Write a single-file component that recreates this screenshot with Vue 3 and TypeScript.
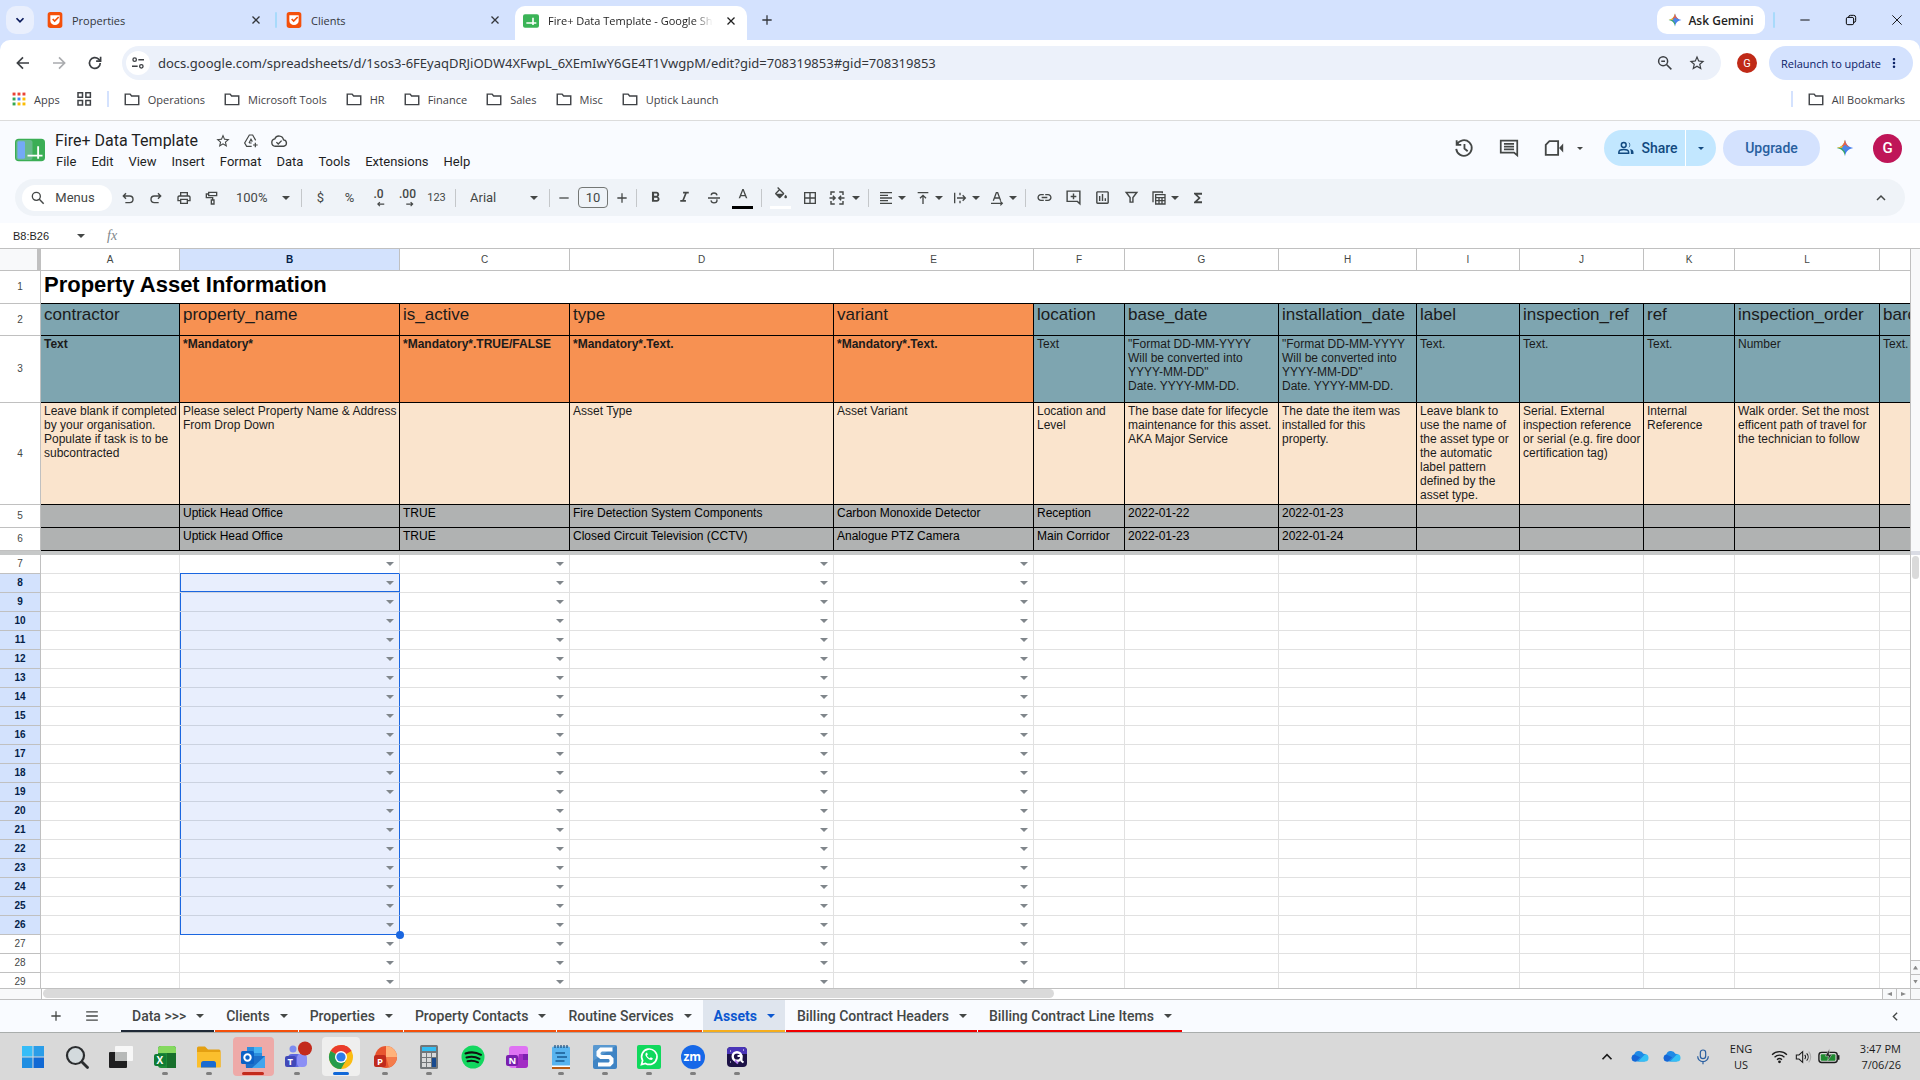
<script setup lang="ts">
import { h, ref } from 'vue'
import type { FunctionalComponent } from 'vue'

const f = (d: string) => `<path d="${d}" fill="currentColor" stroke="none"/>`
const s = (d: string, w = 2) => `<path d="${d}" stroke-width="${w}"/>`

const star = f('M22 9.24l-7.19-.62L12 2 9.19 8.63 2 9.24l5.46 4.73L5.82 21 12 17.27 18.18 21l-1.63-7.03L22 9.24zM12 15.4l-3.76 2.27 1-4.28-3.32-2.88 4.38-.38L12 6.1l1.71 4.04 4.38.38-3.32 2.88 1 4.28L12 15.4z')

const icons: Record<string, string> = {
  chevDown: s('M6 9l6 6 6-6', 3),
  chevUp: s('M6 15l6-6 6 6', 2.2),
  chevLeft: s('M15 5l-7 7 7 7', 2.5),
  close: s('M5 5l14 14M19 5L5 19', 2.6),
  thinClose: s('M4 4l16 16M20 4L4 20', 1.5),
  minimize: s('M4 12h16', 1.6),
  restore: '<rect x="4" y="7.500" width="12.500" height="12.500" rx="2.500" stroke-width="1.700"/>' + s('M8 7.500V7a3 3 0 0 1 3-3h5.500A3.500 3.500 0 0 1 20 7.500V13a3 3 0 0 1-3 3h-.5', 1.7),
  plus: s('M12 4v16M4 12h16', 2.2),
  minus: s('M4 12h16', 2.2),
  back: s('M20 12H5M12 4.500L4.500 12l7.500 7.500', 2.2),
  forward: s('M4 12h15M12 4.500l7.500 7.500-7.500 7.500', 2.2),
  reload: s('M19 12a7.200 7.200 0 1 1-2.200-5.200L19 9', 2.2) + s('M19.500 3.500V9.500H13.500', 2.2),
  tune: '<circle cx="7" cy="7" r="2.600" stroke-width="2"/><circle cx="17" cy="17" r="2.600" stroke-width="2"/>' + s('M12.500 7H21M3 17h8.500', 2.2),
  zoomOut: '<circle cx="9.500" cy="9.500" r="6" stroke-width="2"/>' + s('M14 14l6.500 6.500M7 9.500h5', 2),
  search: '<circle cx="9.500" cy="9.500" r="6" stroke-width="2"/>' + s('M14 14l6.500 6.500', 2.2),
  star,
  folder: s('M3 5.500h6.500l2 2.500H21v11.500H3z', 1.9),
  grid4: s('M4 3.500h6v6H4zM14.500 3.500h6v6h-6zM4 14h6v6H4zM14.500 14h6v6h-6z', 2),
  dots: f('M12 3.500a2.200 2.200 0 1 0 0 4.400 2.200 2.200 0 0 0 0-4.400zM12 9.800a2.200 2.200 0 1 0 0 4.400 2.200 2.200 0 0 0 0-4.400zM12 16.100a2.200 2.200 0 1 0 0 4.400 2.200 2.200 0 0 0 0-4.400z'),
  drive: s('M13 20H5.500L2.500 15 9.500 3h5l4.500 8M9 15l3-5.500 2 3.500M9 15h4', 1.8) + s('M18.500 14.500v7M15 18h7', 1.8),
  cloudDone: s('M7 19a5 5 0 0 1-.5-9.900A6 6 0 0 1 18 10.500 4.300 4.300 0 0 1 18.500 19zM8.500 13.500l2.500 2.500 4.500-4.500', 1.8),
  history: s('M4 3.500v5h5M4.200 8.500A8.500 8.500 0 1 1 3.500 13M12.500 7.500v5l3.500 3', 2),
  comment: s('M3 4h18v16l-3.500-3H3zM6.500 7.500h11M6.500 10.500h11M6.500 13.500h11', 1.9),
  camera: s('M7 4.500h9.500v15H3V8.500z', 2) + f('M17.500 12l4.500-5v10z'),
  people: '<circle cx="9" cy="8" r="3.200" stroke-width="2"/>' + s('M2.500 19v-1.500C2.500 15 6 14 9 14s6.500 1 6.500 3.500V19z', 2) + f('M15 4.200a4 4 0 0 1 0 7.600 5.500 5.500 0 0 0 0-7.600zM17.500 13.300c2.500.6 4.500 1.900 4.500 4.200V20h-3.500v-2.500c0-1.700-.4-3-1-4.200z'),
  undo: s('M9 5L5 9l4 4M5 9h9.500a5 5 0 0 1 0 10H8', 2.1),
  redo: s('M15 5l4 4-4 4M19 9H9.500a5 5 0 0 0 0 10H16', 2.1),
  print: f('M19 8h-1V3H6v5H5c-1.660 0-3 1.340-3 3v6h4v4h12v-4h4v-6c0-1.660-1.340-3-3-3zM8 5h8v3H8V5zm8 12v2H8v-4h8v2zm2-2v-2H6v2H4v-4c0-.55.45-1 1-1h14c.55 0 1 .45 1 1v4h-2z'),
  roller: s('M7 3.500h12v5H7zM7 6H3.500v5.500H13V15M11 15h4v6h-4z', 2),
  bold: f('M15.600 10.790c.97-.67 1.650-1.770 1.650-2.790 0-2.260-1.750-4-4-4H7v14h7.040c2.090 0 3.710-1.700 3.710-3.790 0-1.520-.86-2.820-2.150-3.420zM10 6.500h3c.83 0 1.500.67 1.500 1.500s-.67 1.500-1.500 1.500h-3v-3zm3.500 9H10v-3h3.500c.83 0 1.500.67 1.500 1.500s-.67 1.500-1.500 1.500z'),
  italic: f('M10 4v2.500h2.600l-3.700 9H6V18h8v-2.500h-2.600l3.700-9H18V4z'),
  strike: s('M3 12h18M16.500 8c-.3-2.200-2-3.500-4.500-3.500S7.800 5.700 7.800 8M7.500 15.500c.3 2.300 2 3.700 4.500 3.700s4.500-1.200 4.500-3.400c0-.8-.2-1.300-.6-1.800', 2),
  textColor: f('M11 3L5.500 17h2.200l1.200-3.200h6.200l1.200 3.200h2.200L13 3h-2zm-1.400 9L12 5.700 14.400 12H9.600z'),
  fill: f('M16.560 8.940L7.620 0 6.210 1.410l2.380 2.380-5.150 5.150c-.59.59-.59 1.540 0 2.120l5.500 5.500c.29.29.68.44 1.060.44s.77-.15 1.060-.44l5.500-5.500c.59-.58.59-1.530 0-2.120zM10 5.210L14.790 10H5.210zM19 11.500s-2 2.170-2 3.500c0 1.100.9 2 2 2s2-.9 2-2c0-1.330-2-3.500-2-3.500z'),
  borders: f('M3 3v18h18V3H3zm8 16H5v-6h6v6zm0-8H5V5h6v6zm8 8h-6v-6h6v6zm0-8h-6V5h6v6z'),
  merge: s('M9 4H4v4M15 4h5v4M9 20H4v-4M15 20h5v-4M2 12h7M22 12h-7M6.500 9l3 3-3 3M17.500 9l-3 3 3 3', 1.9),
  align: f('M15 15H3v2h12v-2zm0-8H3v2h12V7zM3 13h18v-2H3v2zm0 8h18v-2H3v2zM3 3v2h18V3H3z'),
  valign: s('M4 4h16M12 21V8.500M7.500 12.500L12 8l4.500 4.500', 2),
  wrap: s('M4 4v16M12 4v4M12 16v4M7.500 12H20M16 8l4 4-4 4', 2),
  rotate: s('M6.500 16L11 4h2l4.500 12M8.500 12h7M3 20h17M17 17l3 3-3 3', 1.9),
  link: f('M3.900 12c0-1.710 1.390-3.100 3.100-3.100h4V7H7c-2.760 0-5 2.240-5 5s2.240 5 5 5h4v-1.900H7c-1.710 0-3.100-1.390-3.100-3.100zM8 13h8v-2H8v2zm9-6h-4v1.900h4c1.710 0 3.100 1.390 3.100 3.100s-1.390 3.100-3.100 3.100h-4V17h4c2.760 0 5-2.240 5-5s-2.240-5-5-5z'),
  addComment: s('M21 21V3H3v14.500h14.500zM12 6.500v8M8 10.500h8', 2),
  chart: f('M9 17H7v-7h2v7zm4 0h-2V7h2v10zm4 0h-2v-4h2v4zm2 2H5V5h14v14zm0-16H5c-1.100 0-2 .9-2 2v14c0 1.100.9 2 2 2h14c1.100 0 2-.9 2-2V5c0-1.100-.9-2-2-2z'),
  filter: s('M4.500 5h15L14 12v6.500h-4V12z', 2),
  views: s('M4 17.500H3V3h14v2M7 7h14v14H7zM7 11.500h14M7 16h14M12 11.500V21M16.500 11.500V21', 2),
  sigma: f('M18 4H6v2l6.500 6L6 18v2h12v-3h-7l5-5-5-5h7z'),
  lines: s('M2 5h20M2 12h20M2 19h20', 2.4),
  decLeft: s('M10 19H21M13.500 15.500L10 19l3.500 3.500', 2),
  decRight: s('M9 19H20M16.500 15.500L20 19l-3.500 3.500', 2),
}

const arts: Record<string, string> = {
  uptick: '<rect x="1" y="0" width="22" height="24" rx="4" fill="#f4500b"/><path d="M5 5h14v8a7 6.500 0 0 1-14 0z" fill="#fff"/><path d="M8.500 10.500l3 3 6-6" stroke="#f4500b" stroke-width="2.600" fill="none"/>',
  sheetFav: '<rect x="0" y="2" width="24" height="20" rx="3" fill="#3bb457"/><path d="M15 7v11M5 15h15" stroke="#fff" stroke-width="2.400" fill="none"/>',
  gemini: '<path d="M12 1c1 6 4.500 10 11 11-6.500 1-10 5-11 11z" fill="#3f78ec"/><path d="M12 1v22C11 17 7.500 13 1 12 7.500 11 11 7 12 1z" fill="#38a566"/><path d="M12 1v11H1C7.500 11 11 7 12 1z" fill="#f2b632"/><path d="M12 1c.6 4 2.500 7 5 9l-5 4-4-5c2.200-2 3.500-4.500 4-8z" fill="#e8604c"/><path d="M7.500 12L12 7.500l6 4.500-6 5z" fill="#4a86e8"/>',
  apps: ['#ea4335', '#ea4335', '#ea4335', '#34a853', '#4285f4', '#fbbc04', '#34a853', '#fbbc04', '#fbbc04']
    .map((c, i) => `<rect x="${1 + (i % 3) * 8.5}" y="${1 + Math.floor(i / 3) * 8.5}" width="5" height="5" fill="${c}"/>`).join(''),
  sheets: '<rect x="0" y="3" width="24" height="18" rx="3" fill="#3bae55"/><rect x="1" y="4" width="13" height="16" rx="2" fill="#67b98a"/><rect x="2" y="5" width="6" height="14" rx="1" fill="#74a9f7"/><path d="M18.500 9v10M10 16.500h12" stroke="#fff" stroke-width="1.500" fill="none"/>',
  windows: '<path d="M1 1h10.500v10.500H1z" fill="#36bdf8"/><path d="M12.500 1H23v10.500H12.500z" fill="#2a9de8"/><path d="M1 12.500h10.500V23H1z" fill="#1e8ee2"/><path d="M12.500 12.500H23V23H12.500z" fill="#1169d4"/>',
  find: '<circle cx="10.500" cy="10.500" r="8.500" fill="#d3dadd" stroke="#2b2d2f" stroke-width="2.200"/><path d="M17 17l5.500 5.500" stroke="#2b2d2f" stroke-width="2.800" stroke-linecap="round"/>',
  taskview: '<rect x="0" y="7" width="18" height="16" rx="1" fill="#1f1f20"/><rect x="6" y="1" width="18" height="15" rx="1" fill="#f7f7f7"/><path d="M6 7h12v9H6z" fill="#b7b9b8"/>',
  excel: '<rect x="5" y="1" width="18" height="22" rx="3" fill="#1f8a38"/><path d="M8 1h12a3 3 0 0 1 3 3v4H5V4a3 3 0 0 1 3-3z" fill="#85d95f"/><path d="M14 8h9v15h-9z" fill="#176f2c"/><rect x="1" y="9" width="12" height="12" rx="2" fill="#107c35"/><text x="3.500" y="18.500" font-size="10" font-weight="700" fill="#fff">X</text>',
  explorer: '<path d="M0 3a1.500 1.500 0 0 1 1.500-1.500H8L11 4.500h11A1.500 1.500 0 0 1 23.500 6v16H0z" fill="#e4a012"/><path d="M0 7h23.500v15.500H0z" fill="#fbbf2d"/><path d="M4 22.500v-4a2.500 2.500 0 0 1 2.500-2.500h10a2.500 2.500 0 0 1 2.500 2.500v4z" fill="#1a6bd0"/>',
  outlook: '<path d="M6 2h15v12H6z" fill="#2b8ddd"/><path d="M13 2h8v6h-8z" fill="#49b4f2"/><path d="M4 11h20v11a1 1 0 0 1-1 1H5z" fill="#1c6fc9"/><path d="M24 11L11 23h12a1 1 0 0 0 1-1z" fill="#41a5ee"/><rect x="0" y="6" width="13" height="13" rx="1.500" fill="#0c62c6"/><circle cx="6.500" cy="12.500" r="3.200" fill="none" stroke="#fff" stroke-width="2"/>',
  teams: '<circle cx="8" cy="4" r="3.500" fill="#7d8cf0"/><rect x="3" y="9" width="13" height="13" rx="4" fill="#5c66e0"/><rect x="12" y="9" width="10" height="13" rx="4" fill="#8b8ff5"/><rect x="0" y="11" width="11" height="11" rx="2" fill="#4149b8"/><text x="2.500" y="20" font-size="9.500" font-weight="700" fill="#fff">T</text><circle cx="20" cy="3.500" r="7" fill="#c32a1c"/>',
  chrome: '<circle cx="12" cy="12" r="12" fill="#fbbc12"/><path d="M12 12L1.600 6A12 12 0 0 1 22.400 6z" fill="#ea3b2c"/><path d="M12 0a12 12 0 0 1 10.400 6H12z" fill="#ea3b2c"/><path d="M1.600 6A12 12 0 0 0 12 24l5.200-9L12 12z" fill="#269c4b"/><circle cx="12" cy="12" r="6" fill="#fff"/><circle cx="12" cy="12" r="4.600" fill="#2f7bea"/>',
  powerpoint: '<circle cx="13" cy="12" r="11" fill="#e8552f"/><path d="M13 1a11 11 0 0 1 11 11H13z" fill="#ffb27a"/><path d="M13 12h11a11 11 0 0 1-8 10.500z" fill="#f47c4b"/><rect x="1" y="10" width="12" height="12" rx="2" fill="#c02a1c"/><text x="4" y="19.500" font-size="9.500" font-weight="700" fill="#fff">P</text>',
  calc: '<rect x="3" y="0" width="18" height="24" rx="1.500" fill="#717679"/><rect x="5" y="2" width="14" height="4" fill="#33bdf2"/><path d="M5 8h4v4H5zM10 8h4v4h-4zM15 8h4v4h-4zM5 13h4v4H5zM10 13h4v4h-4zM5 18h4v4H5zM10 18h4v4h-4z" fill="#d7d9da"/><path d="M15 13h4v9h-4z" fill="#184a8f"/>',
  spotify: '<circle cx="12" cy="12" r="11.500" fill="#13d75f"/><path d="M4.500 8.500c5-1.700 11-1.200 15.500 1.300M5.500 12.500c4.500-1.300 9-.9 13 1.300M6.500 16.200c3.500-.9 7-.6 10.500 1.100" stroke="#111" stroke-width="2" fill="none" stroke-linecap="round"/>',
  onenote: '<rect x="4" y="1" width="19" height="22" rx="3" fill="#df73f3"/><path d="M14 9h9v11a3 3 0 0 1-3 3h-9z" fill="#a22bc4"/><path d="M18 9h5v6h-5z" fill="#7d1fb0"/><rect x="1" y="10" width="12" height="11" rx="2" fill="#7a1fae"/><text x="3.500" y="19" font-size="9.500" font-weight="700" fill="#fff">N</text>',
  notepad: '<rect x="3" y="1.500" width="18" height="20" rx="1.500" fill="#58b4ef"/><rect x="3" y="21" width="18" height="3" fill="#b85c12"/><path d="M3 20.500h18v1.500H3z" fill="#fff"/><path d="M6 0v3M9 0v3M12 0v3M15 0v3M18 0v3" stroke="#1c4a78" stroke-width="1.200"/><path d="M6.500 8H16M8 12h10M6.500 16h9" stroke="#175a93" stroke-width="1.600"/>',
  snagit: '<rect x="0" y="0" width="24" height="24" rx="2" fill="#3f84c4"/><path d="M0 0h24L0 16z" fill="#69a5d8" opacity=".6"/><path d="M19.500 4.500H8L5.500 7v3l2.500 2h8.500l2 2v3.500l-2 2H5" stroke="#fff" stroke-width="4" fill="none"/>',
  whatsapp: '<rect width="24" height="24" rx="2" fill="#10d95d"/><path d="M4.500 19.500l1.100-4A7.700 7.700 0 1 1 8.500 18.400z" fill="none" stroke="#fff" stroke-width="1.700"/><path d="M9 8c-1.200 1-.6 3.200 1.300 5s4.300 2.600 5.200 1.300l.3-1-2-1-1 1c-1.300-.5-2.300-1.500-2.800-2.800l.8-1L10 7.600z" fill="#fff"/>',
  zoom: '<circle cx="12" cy="12" r="12" fill="#1668e8"/><text x="2.500" y="16" font-size="12" font-weight="700" fill="#fff">zm</text>',
  quill: '<rect x="2" y="2" width="20" height="20" rx="4" fill="#1c1246"/><path d="M6 2h12a4 4 0 0 1 4 4v3H2V6a4 4 0 0 1 4-4z" fill="#4a35b8"/><circle cx="12" cy="11.500" r="4.300" stroke="#fff" stroke-width="2.400" fill="none"/><path d="M12.500 11h4v5l2 1.500" stroke="#fff" stroke-width="2" fill="none"/><path d="M10 15.500l3 3" stroke="#b07cf0" stroke-width="2"/><path d="M5 6h1M18 5h1M5 17h1" stroke="#fff"/>',
  cloud: '<path d="M6 19a5 5 0 0 1-1.500-9.800A7 7 0 0 1 17.500 8 5.600 5.600 0 0 1 19 19z" fill="#1f8ae6"/><path d="M10 19L19.500 9a5 5 0 0 1 .5 10z" fill="#35c0f5"/><path d="M1 14a5 5 0 0 1 3.500-4.800L13 13l-6 6H6a5 5 0 0 1-5-5z" fill="#1766d6"/>',
  mic: '<rect x="8" y="1.500" width="8" height="13" rx="4" fill="none" stroke="#2a5fa0" stroke-width="1.800"/><path d="M4 11a8 8 0 0 0 16 0M12 19v4" fill="none" stroke="#2a5fa0" stroke-width="1.800"/>',
  wifi: '<path d="M1.500 9.500a15 15 0 0 1 21 0M5 13a10 10 0 0 1 14 0M8.500 16.500a5 5 0 0 1 7 0" fill="none" stroke="#1b1b1b" stroke-width="1.800"/><circle cx="12" cy="19.500" r="2" fill="#1b1b1b"/>',
  speaker: '<path d="M2 9v6h4l5.500 5V4L6 9z" fill="none" stroke="#1b1b1b" stroke-width="1.600"/><path d="M14.500 9a4 4 0 0 1 0 6M17.500 6.500a8 8 0 0 1 0 11" fill="none" stroke="#1b1b1b" stroke-width="1.600"/><path d="M20.500 4a12 12 0 0 1 0 16" fill="none" stroke="#aaa" stroke-width="1.600"/>',
  battery: '<rect x="1" y="7" width="20" height="11" rx="3" fill="none" stroke="#1b1b1b" stroke-width="1.500"/><rect x="3" y="9" width="16" height="7" rx="1" fill="#1f8a30"/><path d="M22.500 10v5" stroke="#1b1b1b" stroke-width="1.800"/><path d="M12.500 3L8 11h3.500l-1 5L15 9.500h-3z" fill="#1b1b1b" stroke="#d9d9d9" stroke-width=".6"/>',
}

const Icon: FunctionalComponent<{ n: string; s?: number }> = (p) =>
  h('svg', { width: p.s ?? 18, height: p.s ?? 18, viewBox: '0 0 24 24', fill: 'none', stroke: 'currentColor', 'aria-hidden': 'true', innerHTML: icons[p.n] })
const Art: FunctionalComponent<{ n: string; s?: number }> = (p) =>
  h('svg', { width: p.s ?? 24, height: p.s ?? 24, viewBox: '0 0 24 24', overflow: 'visible', 'font-family': 'Open Sans, sans-serif', 'aria-hidden': 'true', innerHTML: arts[p.n] })

const url = ref('docs.google.com/spreadsheets/d/1sos3-6FEyaqDRJiODW4XFwpL_6XEmIwY6GE4T1VwgpM/edit?gid=708319853#gid=708319853')
const fontSize = ref('10')
const nameBox = ref('B8:B26')
const formula = ref('')

const bookmarks = ['Operations', 'Microsoft Tools', 'HR', 'Finance', 'Sales', 'Misc', 'Uptick Launch']
const menus = ['File', 'Edit', 'View', 'Insert', 'Format', 'Data', 'Tools', 'Extensions', 'Help']
const alignTools = ['align', 'valign', 'wrap', 'rotate']
const insertTools = ['link', 'addComment', 'chart', 'filter']

const columns = [
  { id: 'A', w: 139 }, { id: 'B', w: 220 }, { id: 'C', w: 170 }, { id: 'D', w: 264 }, { id: 'E', w: 200 },
  { id: 'F', w: 91 }, { id: 'G', w: 154 }, { id: 'H', w: 138 }, { id: 'I', w: 103 }, { id: 'J', w: 124 },
  { id: 'K', w: 91 }, { id: 'L', w: 145 }, { id: '', w: 100 },
]
const dateFormat = '"Format DD-MM-YYYY\nWill be converted into\nYYYY-MM-DD"\nDate. YYYY-MM-DD.'
const headRows = [
  { n: 2, cls: 'names', cells: ['contractor', 'property_name', 'is_active', 'type', 'variant', 'location', 'base_date', 'installation_date', 'label', 'inspection_ref', 'ref', 'inspection_order', 'barcode'] },
  { n: 3, cls: 'types', cells: ['Text', '*Mandatory*', '*Mandatory*.TRUE/FALSE', '*Mandatory*.Text.', '*Mandatory*.Text.', 'Text', dateFormat, dateFormat, 'Text.', 'Text.', 'Text.', 'Number', 'Text.'] },
  { n: 4, cls: 'notes', cells: [
    'Leave blank if completed\nby your organisation.\nPopulate if task is to be\nsubcontracted',
    'Please select Property Name & Address\nFrom Drop Down', '', 'Asset Type', 'Asset Variant', 'Location and\nLevel',
    'The base date for lifecycle\nmaintenance for this asset.\nAKA Major Service',
    'The date the item was\ninstalled for this\nproperty.',
    'Leave blank to\nuse the name of\nthe asset type or\nthe automatic\nlabel pattern\ndefined by the\nasset type.',
    'Serial. External\ninspection reference\nor serial (e.g. fire door\ncertification tag)',
    'Internal\nReference', 'Walk order. Set the most\nefficent path of travel for\nthe technician to follow', ''] },
  { n: 5, cls: 'sample', cells: ['', 'Uptick Head Office', 'TRUE', 'Fire Detection System Components', 'Carbon Monoxide Detector', 'Reception', '2022-01-22', '2022-01-23', '', '', '', '', ''] },
  { n: 6, cls: 'sample', cells: ['', 'Uptick Head Office', 'TRUE', 'Closed Circuit Television (CCTV)', 'Analogue PTZ Camera', 'Main Corridor', '2022-01-23', '2022-01-24', '', '', '', '', ''] },
]
const bodyRows = Array.from({ length: 23 }, (_, i) => i + 7)
const selected = (n: number) => n >= 8 && n <= 26

const sheetTabs = [
  { t: 'Data >>>', c: 'navy' }, { t: 'Clients', c: 'orange' }, { t: 'Properties', c: 'orange' },
  { t: 'Property Contacts', c: 'orange' }, { t: 'Routine Services', c: 'orange' }, { t: 'Assets', c: 'amber' },
  { t: 'Billing Contract Headers', c: 'red' }, { t: 'Billing Contract Line Items', c: 'red' },
]
const apps = [
  { n: 'windows' }, { n: 'find' }, { n: 'taskview' }, { n: 'excel', dot: true }, { n: 'explorer', dot: true },
  { n: 'outlook', alert: true }, { n: 'teams', dot: true }, { n: 'chrome', active: true }, { n: 'powerpoint', dot: true },
  { n: 'calc', dot: true }, { n: 'spotify' }, { n: 'onenote' }, { n: 'notepad', dot: true }, { n: 'snagit', dot: true },
  { n: 'whatsapp', dot: true }, { n: 'zoom', dot: true }, { n: 'quill', dot: true },
]
</script>

<template>
  <div class="screen">
    <header class="chrome">
      <div class="tabstrip">
        <button class="tabsearch" aria-label="Search tabs"><Icon n="chevDown" :s="14" /></button>
        <div class="tab"><Art n="uptick" :s="16" /><span class="tabtitle">Properties</span><button aria-label="Close tab"><Icon n="close" :s="12" /></button></div>
        <i class="tabsep"></i>
        <div class="tab"><Art n="uptick" :s="16" /><span class="tabtitle">Clients</span><button aria-label="Close tab"><Icon n="close" :s="12" /></button></div>
        <div class="tab current"><Art n="sheetFav" :s="16" /><span class="tabtitle fade">Fire+ Data Template - Google Sheets</span><button aria-label="Close tab"><Icon n="close" :s="12" /></button></div>
        <button class="newtab" aria-label="New tab"><Icon n="plus" :s="14" /></button>
        <div class="grow"></div>
        <button class="gemini"><Art n="gemini" :s="14" />Ask Gemini</button>
        <i class="tabsep"></i>
        <div class="winbtns">
          <button aria-label="Minimise"><Icon n="minimize" :s="14" /></button>
          <button aria-label="Restore"><Icon n="restore" :s="14" /></button>
          <button aria-label="Close"><Icon n="thinClose" :s="14" /></button>
        </div>
      </div>
      <div class="addressrow">
        <button class="nav" aria-label="Back"><Icon n="back" /></button>
        <button class="nav off" aria-label="Forward"><Icon n="forward" /></button>
        <button class="nav" aria-label="Reload"><Icon n="reload" /></button>
        <div class="omnibox">
          <button class="site" aria-label="Site information"><Icon n="tune" :s="16" /></button>
          <input v-model="url" aria-label="Address" />
          <button class="omni" aria-label="Zoom"><Icon n="zoomOut" /></button>
          <button class="omni" aria-label="Bookmark this tab"><Icon n="star" /></button>
        </div>
        <button class="profile">G</button>
        <button class="relaunch">Relaunch to update<Icon n="dots" :s="14" /></button>
      </div>
      <nav class="bookmarks">
        <a href="#"><Art n="apps" :s="14" />Apps</a>
        <button aria-label="Tab groups"><Icon n="grid4" :s="18" /></button>
        <i class="bmsep"></i>
        <a v-for="b in bookmarks" :key="b" class="bm" href="#"><Icon n="folder" />{{ b }}</a>
        <div class="grow"></div>
        <i class="bmsep"></i>
        <a class="bm all" href="#"><Icon n="folder" />All Bookmarks</a>
      </nav>
    </header>

    <section class="dochead">
      <div class="titlebar">
        <a href="#" class="logo" aria-label="Sheets home"><Art n="sheets" :s="30" /></a>
        <div class="docinfo">
          <div class="doctitle"><h1>Fire+ Data Template</h1>
            <button aria-label="Star"><Icon n="star" :s="16" /></button>
            <button aria-label="Add shortcut to Drive"><Icon n="drive" :s="16" /></button>
            <button aria-label="See document status"><Icon n="cloudDone" :s="18" /></button>
          </div>
          <div class="menubar"><button v-for="m in menus" :key="m">{{ m }}</button></div>
        </div>
        <div class="grow"></div>
        <div class="actions">
          <button class="round" aria-label="Version history"><Icon n="history" :s="22" /></button>
          <button class="round" aria-label="Comments"><Icon n="comment" :s="22" /></button>
          <button class="meet" aria-label="Join a call"><Icon n="camera" :s="22" /><i class="caret small"></i></button>
          <div class="share">
            <button><Icon n="people" />Share</button>
            <button class="sharemore" aria-label="Sharing options"><i class="caret small"></i></button>
          </div>
          <button class="upgrade">Upgrade</button>
          <button class="spark" aria-label="Ask Gemini"><Art n="gemini" :s="18" /></button>
          <button class="account">G</button>
        </div>
      </div>
      <div class="toolbar">
        <button class="menus"><Icon n="search" :s="16" />Menus</button>
        <button v-for="t in ['undo', 'redo', 'print', 'roller']" :key="t" class="tool slim" :aria-label="t"><Icon :n="t" :s="16" /></button>
        <label class="pick zoom"><select aria-label="Zoom"><option>100%</option></select><i class="caret"></i></label>
        <i class="sep"></i>
        <button class="tool txt">$</button>
        <button class="tool txt">%</button>
        <button class="tool dec">.0<Icon n="decLeft" :s="14" /></button>
        <button class="tool dec">.00<Icon n="decRight" :s="14" /></button>
        <button class="tool num">123</button>
        <i class="sep"></i>
        <label class="pick font"><select aria-label="Font"><option>Arial</option></select><i class="caret"></i></label>
        <i class="sep"></i>
        <button class="step" aria-label="Decrease font size"><Icon n="minus" :s="14" /></button>
        <input v-model="fontSize" class="size" aria-label="Font size" />
        <button class="step" aria-label="Increase font size"><Icon n="plus" :s="14" /></button>
        <i class="sep"></i>
        <button class="tool" aria-label="Bold"><Icon n="bold" :s="17" /></button>
        <button class="tool" aria-label="Italic"><Icon n="italic" :s="17" /></button>
        <button class="tool" aria-label="Strikethrough"><Icon n="strike" :s="16" /></button>
        <button class="tool swatch" aria-label="Text colour"><Icon n="textColor" :s="16" /></button>
        <i class="sep"></i>
        <button class="tool swatch white" aria-label="Fill colour"><Icon n="fill" :s="16" /></button>
        <button class="tool" aria-label="Borders"><Icon n="borders" :s="16" /></button>
        <button class="drop merge" aria-label="Merge cells"><Icon n="merge" :s="18" /><i class="caret"></i></button>
        <i class="sep"></i>
        <button v-for="t in alignTools" :key="t" class="drop" :aria-label="t"><Icon :n="t" :s="16" /><i class="caret"></i></button>
        <i class="sep"></i>
        <button v-for="t in insertTools" :key="t" class="tool" :aria-label="t"><Icon :n="t" :s="17" /></button>
        <button class="drop" aria-label="Table views"><Icon n="views" :s="16" /><i class="caret"></i></button>
        <button class="tool" aria-label="Functions"><Icon n="sigma" :s="16" /></button>
        <div class="grow"></div>
        <button class="tool collapse" aria-label="Hide the menus"><Icon n="chevUp" :s="16" /></button>
      </div>
    </section>

    <section class="formulabar">
      <input v-model="nameBox" class="namebox" aria-label="Name box" />
      <button aria-label="Named ranges"><i class="caret"></i></button>
      <em>fx</em>
      <input v-model="formula" class="formula" aria-label="Formula" />
    </section>

    <main class="work">
      <div class="gridarea">
        <table>
          <colgroup><col class="rowcol" /><col v-for="c in columns" :key="c.id" :style="{ width: c.w + 'px' }" /></colgroup>
          <thead>
            <tr><th class="corner"></th><th v-for="c in columns" :key="c.id" :class="{ sel: c.id === 'B' }">{{ c.id }}</th></tr>
          </thead>
          <tbody>
            <tr class="title"><th>1</th><td colspan="13">Property Asset Information</td></tr>
            <tr v-for="r in headRows" :key="r.n" :class="r.cls">
              <th>{{ r.n }}</th>
              <td v-for="(c, i) in r.cells" :key="i" :class="{ must: i > 0 && i < 5, strong: i < 5 }">{{ c }}</td>
            </tr>
            <tr class="freeze"><td colspan="14"></td></tr>
            <tr v-for="n in bodyRows" :key="n" class="row">
              <th :class="{ sel: selected(n) }">{{ n }}</th>
              <td v-for="(c, i) in columns" :key="i"
                :class="{ picked: i === 1 && selected(n), first: i === 1 && n === 8, above: i === 1 && n === 7, last: i === 1 && n === 26 }">
                <button v-if="i > 0 && i < 5" class="dd" aria-label="Show options"></button>
                <span v-if="i === 1 && n === 26" class="handle"></span>
              </td>
            </tr>
          </tbody>
        </table>
      </div>
      <div class="vscroll">
        <div class="vtop"></div><div class="vbar"></div>
        <div class="vtrack"><div class="vthumb"></div></div>
        <button class="up" aria-label="Scroll up"></button>
        <button class="down" aria-label="Scroll down"></button>
      </div>
    </main>
    <div class="hscroll">
      <div class="hstub"></div>
      <div class="htrack"><div class="hthumb"></div></div>
      <button class="left" aria-label="Scroll left"></button>
      <button class="right" aria-label="Scroll right"></button>
      <div class="hcorner"></div>
    </div>

    <footer class="sheets">
      <button class="sq" aria-label="Add sheet"><Icon n="plus" :s="14" /></button>
      <button class="sq" aria-label="All sheets"><Icon n="lines" :s="14" /></button>
      <div class="sheettabs">
        <button v-for="t in sheetTabs" :key="t.t" class="stab" :class="[t.c, { on: t.t === 'Assets' }]">{{ t.t }}<i class="caret"></i></button>
      </div>
      <div class="grow"></div>
      <button class="sq" aria-label="Show side panel"><Icon n="chevLeft" :s="13" /></button>
    </footer>

    <footer class="taskbar">
      <button v-for="a in apps" :key="a.n" class="app" :class="{ active: a.active, alert: a.alert, dot: a.dot }" :aria-label="a.n">
        <Art :n="a.n" />
      </button>
      <div class="grow"></div>
      <button class="tray" aria-label="Hidden icons"><Icon n="chevUp" :s="18" /></button>
      <button class="tray" aria-label="OneDrive"><Art n="cloud" :s="17" /></button>
      <button class="tray" aria-label="OneDrive work"><Art n="cloud" :s="17" /></button>
      <button class="tray" aria-label="Microphone"><Art n="mic" :s="16" /></button>
      <button class="lang">ENG<br />US</button>
      <button class="quick" aria-label="Network, volume, battery"><Art n="wifi" :s="17" /><Art n="speaker" :s="16" /><Art n="battery" :s="22" /></button>
      <button class="clock">3:47 PM<br />7/06/26</button>
    </footer>
  </div>
</template>

<style>
body { margin: 0; background: #fff; }
</style>

<style scoped>
.screen { display: flex; flex-direction: column; height: 100vh; overflow: hidden; font-family: "Open Sans", "Noto Sans", sans-serif; color: #1f1f1f; }
.screen *, .screen *::before, .screen *::after { box-sizing: border-box; }
button, input, select { font: inherit; color: inherit; background: none; border: 0; padding: 0; margin: 0; outline: 0; }
button { display: flex; align-items: center; justify-content: center; flex: none; }
svg { flex: none; display: block; }
a { color: inherit; text-decoration: none; }
.grow { flex: 1; }
.caret { flex: none; width: 0; height: 0; border: 4px solid transparent; border-top-color: currentColor; border-bottom: 0; }
.small { border-width: 3px; border-bottom: 0; }

.chrome { flex: none; background: #d4e2fe; border-bottom: 1px solid #dcdcdc; }
.tabstrip { display: flex; align-items: center; height: 40px; font-size: 11px; }
.tabsearch { width: 28px; height: 28px; margin: 0 4px 0 6px; border-radius: 10px; background: #e9effd; color: #0b1b5c; }
.tab { display: flex; align-items: center; width: 237px; height: 34px; padding: 0 13px 0 9px; color: #33363b; }
.tabtitle { flex: 1; margin-left: 9px; overflow: hidden; white-space: nowrap; }
.tabsep { width: 2px; height: 16px; border-radius: 1px; background: #a8dafb; }
.current { align-self: flex-end; width: 232px; margin-left: 1px; padding: 0 10px 5px 8px; border-radius: 10px 10px 0 0; background: #fff; color: #1f1f1f; }
.fade { margin-right: 12px; mask-image: linear-gradient(90deg, #000 88%, transparent); }
.newtab { width: 28px; height: 28px; margin-left: 6px; color: #33363b; }
.gemini { gap: 6px; width: 108px; height: 28px; margin-right: 8px; border-radius: 10px; background: #fff; font-size: 12px; font-weight: 600; }
.winbtns { display: flex; margin-left: 7px; color: #000; }
.winbtns button { width: 46px; height: 40px; }
.addressrow { display: flex; align-items: center; height: 44px; padding: 4px 7px 2px 5px; border-radius: 10px 10px 0 0; background: #fff; color: #3c3f43; }
.nav { width: 36px; height: 34px; }
.off { color: #a9abae; }
.omnibox { display: flex; align-items: center; flex: 1; height: 34px; margin-left: 9px; padding: 0 8px 0 4px; border-radius: 17px; background: #ecf1fa; }
.omnibox input { flex: 1; min-width: 0; margin-left: 8px; font: 13px "Noto Sans", "Open Sans", sans-serif; color: #33363a; }
.site { width: 24px; height: 24px; border-radius: 12px; background: #fff; }
.omni { width: 32px; height: 32px; }
.profile { width: 20px; height: 20px; margin: 0 12px 0 16px; border-radius: 10px; background: #c02a17; color: #fff; font: 11px Roboto, sans-serif; }
.relaunch { gap: 6px; width: 144px; height: 34px; border-radius: 17px; background: #d4e2fe; color: #0a2166; font-size: 11px; }
.bookmarks { display: flex; align-items: center; height: 36px; padding: 0 15px 6px 12px; background: #fff; font-size: 11px; color: #3f4246; }
.bookmarks a { display: flex; align-items: center; gap: 8px; white-space: nowrap; }
.bookmarks button { margin-left: 15px; }
.bmsep { width: 2px; height: 16px; margin: 0 14px; background: #d4e2fe; }
.bookmarks .bm { gap: 7px; margin-right: 18px; }
.bookmarks .all { margin-right: 0; }

.dochead { flex: none; padding: 0 15px 7px; background: #f9fbff; font-family: Roboto, sans-serif; color: #444746; }
.titlebar { display: flex; height: 58px; }
.logo { margin-top: 14px; }
.docinfo { margin: 8px 0 0 10px; color: #1f1f1f; }
.doctitle { display: flex; align-items: center; height: 24px; color: #444746; }
.doctitle h1 { margin: 0 11px 0 0; font-size: 16px; font-weight: 400; line-height: 24px; color: #1f1f1f; }
.doctitle button { width: 28px; height: 24px; }
.menubar { display: flex; gap: 15px; padding-left: 1px; font-size: 13px; line-height: 18px; }
.actions { display: flex; align-items: center; height: 54px; }
.round { width: 45px; height: 36px; }
.meet { gap: 12px; width: 64px; margin-right: 9px; }
.share { display: flex; width: 112px; height: 36px; margin-right: 7px; border-radius: 18px; overflow: hidden; background: #c2e7ff; color: #124a80; font-size: 14px; font-weight: 500; }
.share button { flex: 1; gap: 6px; padding-left: 6px; }
.share .sharemore { flex: none; width: 31px; padding: 0; border-left: 1px solid #fff; }
.upgrade { width: 97px; height: 36px; border-radius: 18px; background: #d4e2fe; color: #285f9e; font-size: 14px; font-weight: 500; }
.spark { width: 50px; height: 36px; }
.account { width: 29px; height: 29px; margin: 0 3px; border-radius: 15px; background: #bf1558; color: #fff; font-size: 15px; font-weight: 500; }

.toolbar { display: flex; align-items: center; height: 37px; padding: 0 10px 0 7px; border-radius: 19px; background: #eff3f8; font-size: 13px; }
.menus { gap: 9px; width: 90px; height: 26px; margin-right: 2px; padding-right: 9px; border-radius: 13px; background: #fff; }
.tool { width: 29px; height: 28px; }
.slim { width: 28px; }
.pick { display: flex; align-items: center; height: 28px; padding: 0 7px 0 10px; }
.pick select { flex: 1; appearance: none; }
.zoom { width: 71px; }
.font { width: 85px; }
.sep { flex: none; width: 1px; height: 18px; margin: 0 4px; background: #c4c7ca; }
.dec { flex-direction: column; font-size: 12px; font-weight: 500; line-height: 10px; }
.dec svg { margin-top: -6px; }
.num { font-size: 11px; }
.step { width: 20px; height: 28px; }
.size { width: 30px; height: 21px; margin: 0 4px; border: 1px solid #747775; border-radius: 4px; text-align: center; }
.swatch { align-items: flex-start; padding-top: 3px; background: linear-gradient(#000, #000) center 22px / 21px 3px no-repeat; }
.white { background-image: linear-gradient(#fff, #fff); }
.drop { gap: 4px; width: 37px; height: 28px; }
.merge { width: 40px; gap: 6px; }
.collapse { margin-right: 0; }

.formulabar { display: flex; flex: none; align-items: center; height: 25px; background: #fff; font: 12px "Liberation Sans", Arial, sans-serif; color: #444746; }
.namebox { width: 63px; padding-left: 13px; font-size: 11px; color: #1f1f1f; }
.formulabar button { width: 36px; height: 24px; }
.formulabar em { margin-left: 8px; font: italic 14px "Liberation Serif", serif; color: #80868b; }
.formula { flex: 1; margin-left: 8px; }

.work { display: flex; flex: 1; min-height: 0; border-top: 1px solid #c0c0c0; }
.gridarea { flex: 1; min-width: 0; overflow: hidden; }
table { width: 1980px; table-layout: fixed; border-collapse: separate; border-spacing: 0; font: 12px/14px "Liberation Sans", Arial, sans-serif; }
.rowcol { width: 41px; }
th, td { padding: 0; border: 0 solid #e1e1e1; border-width: 0 1px 1px 0; }
th { border-color: #c0c0c0; font: 10px/12px "Liberation Sans", Arial, sans-serif; color: #444746; vertical-align: middle; text-align: center; }
thead th { height: 22px; }
th.sel { background: #d3e2fd; color: #041e49; font-weight: 700; }
.corner { border-right: 4px solid #c0c0c0; background: #f8f9fa; }
tbody td { padding: 1px 0 0 3px; vertical-align: top; white-space: pre; overflow: hidden; }
.title td { height: 33px; padding: 0 0 0 3px; border-right: 0; border-bottom-color: #000; font-size: 22px; font-weight: 700; line-height: 27px; color: #000; }
.names td, .types td, .notes td, .sample td { border-color: #000; color: #1b1b1b; }
.names td { height: 32px; padding-top: 0; background: #7ea5b0; font-size: 17px; line-height: 21px; }
.types td { height: 67px; background: #7ea5b0; }
.types .strong { font-weight: 700; }
.names .must, .types .must { background: #f79152; }
.notes td { height: 102px; background: #fae4cd; }
.sample td { height: 23px; background: #b0b2b2; color: #000; }
.freeze td { height: 4px; padding: 0; border: 0; background: #c6c8c8; }
.row td { position: relative; height: 19px; padding: 0; overflow: visible; }
.dd { position: absolute; right: 5px; top: 7px; width: 8px; height: 4px; background: #80868b; clip-path: polygon(0 0, 100% 0, 50% 100%); }
.row .above { border-bottom-color: #1a66e0; }
.row .picked { border-right-color: #1a66e0; border-bottom-color: #cbd2e0; background: #e8eefd; box-shadow: inset 1px 0 #1a66e0; }
.row .first { box-shadow: inset 1px 0 #1a66e0, inset 0 -1px #1a66e0; }
.row .last { border-bottom-color: #1a66e0; }
.handle { position: absolute; right: -5px; bottom: -5px; z-index: 1; width: 8px; height: 8px; border-radius: 4px; background: #1a66e0; }

.vscroll { display: flex; flex-direction: column; flex: none; width: 10px; border-left: 1px solid #c0c0c0; }
.vtop { flex: none; height: 302px; background: #f8f9fa; }
.vbar { flex: none; height: 4px; background: #dadce4; }
.vtrack { flex: 1; padding: 1px 1px 0; }
.vthumb { height: 23px; border-radius: 4px; background: #dadada; }
.vscroll button, .hscroll button { position: relative; background: #f8f9fa; }
.vscroll button { height: 14px; border-top: 1px solid #c0c0c0; }
.up::after, .down::after, .left::after, .right::after { content: ""; width: 5px; height: 4px; background: #8a8a8a; clip-path: polygon(0 100%, 50% 0, 100% 100%); }
.down::after { clip-path: polygon(0 0, 100% 0, 50% 100%); }
.left::after { clip-path: polygon(100% 0, 100% 100%, 0 50%); }
.right::after { clip-path: polygon(0 0, 100% 50%, 0 100%); }
.hscroll { display: flex; flex: none; height: 12px; border: 1px solid #c0c0c0; border-width: 1px 0; background: #fff; }
.hstub { width: 42px; border-right: 1px solid #c0c0c0; background: #f8f9fa; }
.htrack { flex: 1; padding-left: 1px; }
.hthumb { width: 55%; height: 9px; border-radius: 5px; background: #dadada; }
.hscroll button { width: 14px; border-left: 1px solid #c0c0c0; }
.hcorner { width: 10px; border-left: 1px solid #c0c0c0; background: #f8f9fa; }

.sheets { display: flex; flex: none; align-items: center; height: 33px; padding: 0 7px 0 38px; border-bottom: 1px solid #a9adac; background: #f9fbff; font: 500 14px Roboto, sans-serif; color: #444746; }
.sq { width: 36px; height: 32px; }
.sheettabs { display: flex; gap: 1px; margin-left: 11px; height: 32px; }
.stab { gap: 10px; padding: 2px 10px 0 11px; border-bottom: 2px solid; white-space: nowrap; }
.navy { border-bottom-color: #1f2937; }
.orange { border-bottom-color: #f4500b; }
.amber { border-bottom-color: #f6ae1c; }
.red { border-bottom-color: #f00000; }
.on { background: #dfe5ee; color: #0b57d0; font-weight: 700; }

.taskbar { display: flex; flex: none; align-items: center; height: 47px; padding: 0 19px 0 11px; background: #d9d9d9; font-size: 11px; color: #1b1b1b; }
.app { position: relative; width: 44px; height: 47px; }
.dot::after { content: ""; position: absolute; left: 19px; bottom: 5px; width: 6px; height: 3px; border-radius: 2px; background: #7f7f7f; }
.active::before, .alert::before { content: ""; position: absolute; inset: 4px 3px; border-radius: 4px; background: #efefee; }
.alert::before { inset: 4px 1px 4px 2px; background: #eeaaa8; }
.active::after, .alert::after { content: ""; position: absolute; left: 14px; bottom: 5px; width: 16px; height: 3px; border-radius: 2px; background: #1168d8; }
.alert::after { left: 11px; width: 22px; background: #c32a1c; }
.app svg { position: relative; }
.tray { width: 32px; height: 40px; }
.lang { width: 44px; height: 40px; line-height: 16px; }
.quick { gap: 7px; width: 84px; height: 40px; }
.clock { min-width: 54px; justify-content: flex-end; text-align: right; line-height: 16px; }
</style>
